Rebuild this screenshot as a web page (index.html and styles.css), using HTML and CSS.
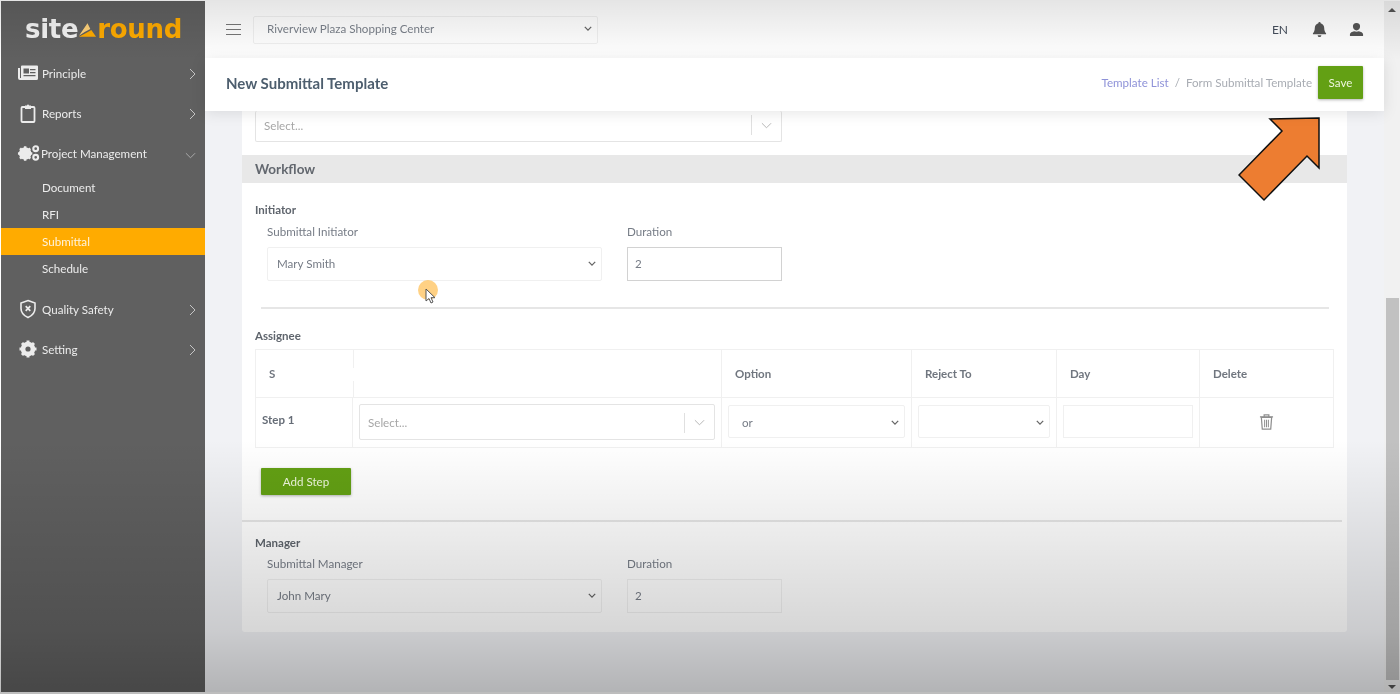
FILE: index.html
```html
<!DOCTYPE html>
<html lang="en">
<head>
    <meta charset="UTF-8">
    <meta name="viewport" content="width=device-width, initial-scale=1.0">
    <title>New Submittal Template</title>
    <link rel="stylesheet" href="styles.css">
</head>
<body>
    <svg class="icon-defs" width="0" height="0">
        <symbol id="chevron" viewBox="0 0 10 6"><path d="M1 1l4 4 4-4" fill="none" stroke="currentColor" stroke-width="1.6"/></symbol>
        <symbol id="chevron-thin" viewBox="0 0 12 7"><path d="M1 1l5 5 5-5" fill="none" stroke="currentColor" stroke-width="1"/></symbol>
        <symbol id="caret-right" viewBox="0 0 7 12"><path d="M1 1l5 5-5 5" fill="none" stroke="currentColor" stroke-width="1"/></symbol>
    </svg>

    <aside class="sidebar">
        <div class="logo"><span>site</span><svg class="logo-mark" viewBox="0 0 20 14"><path d="M1 13L10 0l3 6-6 3z" fill="#ffd27a"/><path d="M1 14l8-4 5-3 5 7z" fill="#ffab00"/></svg><span class="logo-accent">round</span></div>

        <nav class="menu">
            <a class="menu-item">
                <svg class="menu-icon" viewBox="0 0 20 16"><path d="M0 3v10a2 2 0 0 0 2 2h16.500a1.500 1.500 0 0 0 1.500-1.500v-12A1 1 0 0 0 19 .5H4a1 1 0 0 0-1 1V13H2V3z" fill="currentColor"/><path d="M5.500 3.500h5.500v5H5.500zM12 4h5.500v1.300H12zM12 7h5.500v1.300H12zM5.500 10h12v1.300h-12z" fill="#606060"/></svg>
                <span>Principle</span>
                <svg class="menu-caret"><use href="#caret-right"/></svg>
            </a>
            <a class="menu-item">
                <svg class="menu-icon" viewBox="0 0 20 20"><path d="M4.500 4h11a1 1 0 0 1 1 1v13a1 1 0 0 1-1 1h-11a1 1 0 0 1-1-1V5a1 1 0 0 1 1-1z" fill="none" stroke="currentColor" stroke-width="1.800"/><path d="M7 2.500h2a1 1 0 0 1 2 0h2V6H7z" fill="currentColor"/></svg>
                <span>Reports</span>
                <svg class="menu-caret"><use href="#caret-right"/></svg>
            </a>
            <a class="menu-item">
                <svg class="menu-icon menu-icon-wide" viewBox="0 0 24 18"><circle cx="8.500" cy="9.500" r="4.500" fill="none" stroke="currentColor" stroke-width="4"/><path d="M8.500 2v15M1 9.500h15M3.200 4.200l10.600 10.600M13.800 4.200L3.200 14.800" stroke="currentColor" stroke-width="2.600"/><circle cx="19.500" cy="4.500" r="2.500" fill="none" stroke="currentColor" stroke-width="2.200"/><circle cx="19.500" cy="13.500" r="2.500" fill="none" stroke="currentColor" stroke-width="2.200"/></svg>
                <span>Project Management</span>
                <svg class="menu-caret menu-caret-down"><use href="#chevron-thin"/></svg>
            </a>
            <div class="submenu">
                <a class="submenu-item">Document</a>
                <a class="submenu-item">RFI</a>
                <a class="submenu-item active">Submittal</a>
                <a class="submenu-item">Schedule</a>
            </div>
            <a class="menu-item">
                <svg class="menu-icon" viewBox="0 0 20 20"><path d="M10 1.500l7 2.500v5.500c0 4-3 7.200-7 9-4-1.800-7-5-7-9V4z" fill="none" stroke="currentColor" stroke-width="1.600"/><path d="M7.700 7.200l4.600 4.600M12.300 7.200l-4.600 4.600" stroke="currentColor" stroke-width="1.700"/></svg>
                <span>Quality Safety</span>
                <svg class="menu-caret"><use href="#caret-right"/></svg>
            </a>
            <a class="menu-item">
                <svg class="menu-icon" viewBox="0 0 20 20"><circle cx="10" cy="10" r="5" fill="none" stroke="currentColor" stroke-width="4.500"/><path d="M10 1.500v17M1.500 10h17M4 4l12 12M16 4L4 16" stroke="currentColor" stroke-width="3"/><circle cx="10" cy="10" r="2.600" fill="#606060"/></svg>
                <span>Setting</span>
                <svg class="menu-caret"><use href="#caret-right"/></svg>
            </a>
        </nav>
    </aside>

    <div class="main">
        <div class="main-column">
            <header class="topbar">
                <div class="hamburger"><i></i><i></i><i></i></div>
                <div class="project-select">
                    <span>Riverview Plaza Shopping Center</span>
                    <svg class="chevron"><use href="#chevron"/></svg>
                </div>
                <div class="topbar-right">
                    <span class="lang">EN</span>
                    <svg class="top-icon" viewBox="0 0 16 16"><path d="M8 0a1.200 1.200 0 0 1 1.200 1.300C11.500 1.900 13 3.800 13 6.200c0 3.500 1 4.800 2 5.800v1H1v-1c1-1 2-2.300 2-5.800 0-2.400 1.500-4.300 3.800-4.900A1.200 1.200 0 0 1 8 0zM6 14h4a2 2 0 0 1-4 0z" fill="currentColor"/></svg>
                    <svg class="top-icon" viewBox="0 0 16 16"><path d="M8 1a3.800 3.800 0 0 1 3.800 3.900C11.800 7.100 10.100 9 8 9S4.200 7.100 4.200 4.900A3.800 3.800 0 0 1 8 1zM1 15v-2c0-1.600 2.400-2.800 4.500-3.200 1.600.7 3.400.7 5 0 2.100.4 4.500 1.600 4.500 3.200v2z" fill="currentColor"/></svg>
                </div>
            </header>

            <div class="page-header">
                <h1>New Submittal Template</h1>
                <div class="breadcrumb">
                    <a>Template List</a>
                    <span class="crumb-sep">/</span>
                    <span>Form Submittal Template</span>
                </div>
                <button class="btn btn-save">Save</button>
            </div>

            <div class="content">
                <div class="card">
                    <div class="select-row">
                        <div class="search-select search-select-top">
                            <span>Select...</span>
                            <i class="divider"></i>
                            <svg class="chevron-thin"><use href="#chevron-thin"/></svg>
                        </div>
                    </div>

                    <div class="section-band">Workflow</div>

                    <div class="group group-initiator">
                        <div class="group-title">Initiator</div>
                        <div class="field-row">
                            <div class="field field-wide">
                                <label>Submittal Initiator</label>
                                <div class="fake-select"><span>Mary Smith</span><svg class="chevron"><use href="#chevron"/></svg></div>
                            </div>
                            <div class="field field-short">
                                <label>Duration</label>
                                <div class="fake-input fake-input-strong">2</div>
                            </div>
                        </div>
                    </div>

                    <hr class="rule rule-inner">

                    <div class="group">
                        <div class="group-title group-title-table">Assignee</div>
                        <table class="steps">
                            <colgroup>
                                <col class="col-step"><col class="col-user"><col class="col-option"><col class="col-reject"><col class="col-day"><col>
                            </colgroup>
                            <thead>
                                <tr>
                                    <th class="th-step">S</th>
                                    <th class="th-blank"></th>
                                    <th>Option</th>
                                    <th>Reject To</th>
                                    <th>Day</th>
                                    <th>Delete</th>
                                </tr>
                            </thead>
                            <tbody>
                                <tr>
                                    <td class="step-name">Step 1</td>
                                    <td class="cell-user">
                                        <div class="search-select">
                                            <span>Select...</span>
                                            <i class="divider"></i>
                                            <svg class="chevron-thin"><use href="#chevron-thin"/></svg>
                                        </div>
                                    </td>
                                    <td><div class="fake-select fake-select-small"><span>or</span><svg class="chevron"><use href="#chevron"/></svg></div></td>
                                    <td><div class="fake-select fake-select-small"><span></span><svg class="chevron"><use href="#chevron"/></svg></div></td>
                                    <td><div class="fake-input fake-input-small"></div></td>
                                    <td class="cell-delete">
                                        <svg class="trash" viewBox="0 0 16 18"><path d="M1 3.500h14M5.500 3V1.500h5V3" fill="none" stroke="currentColor" stroke-width="1.300"/><path d="M2.500 4l1 12.500h9l1-12.500z" fill="none" stroke="currentColor" stroke-width="1.300"/><path d="M6 6.500v8M8 6.500v8M10 6.500v8" stroke="currentColor" stroke-width="1.100"/></svg>
                                    </td>
                                </tr>
                            </tbody>
                        </table>
                        <button class="btn btn-add">Add Step</button>
                    </div>

                    <hr class="rule">

                    <div class="group group-manager">
                        <div class="group-title">Manager</div>
                        <div class="field-row">
                            <div class="field field-wide">
                                <label>Submittal Manager</label>
                                <div class="fake-select"><span>John Mary</span><svg class="chevron"><use href="#chevron"/></svg></div>
                            </div>
                            <div class="field field-short">
                                <label>Duration</label>
                                <div class="fake-input">2</div>
                            </div>
                        </div>
                    </div>
                </div>
            </div>
        </div>

        <div class="scrollbar">
            <i class="scroll-arrow scroll-up"></i>
            <div class="scroll-thumb"></div>
            <i class="scroll-arrow scroll-down"></i>
        </div>
    </div>

    <!-- video frame shading, cursor and the callout arrow sit over the page -->
    <div class="shade"></div>
    <div class="cursor-dot"></div>
    <svg class="cursor" viewBox="0 0 12 16"><path d="M1 1v12l3-2.500 2 4.500 2-1-2-4.300h4z" fill="#fff" stroke="#555" stroke-width="1"/></svg>
    <svg class="callout" viewBox="0 0 84 86"><path d="M81 2L32 3l12 12L1 59l25 25 43-44 12 12z" fill="#ed7d31" stroke="#111" stroke-width="1.500"/></svg>
</body>
</html>
```

FILE: styles.css
```css
* {
    box-sizing: border-box;
}

html, body {
    height: 100%;
}

body {
    margin: 0;
    padding: 1px 0 2px 1px;
    display: flex;
    overflow: hidden;
    background-color: #fff;
    font-family: 'Lato', sans-serif;
    font-size: 11.6px;
    color: #6b7280;
    filter: blur(0.4px);
}

.icon-defs {
    position: absolute;
}

/* sidebar */
.sidebar {
    width: 204px;
    flex-shrink: 0;
    background-color: #606060;
    color: #ececec;
}

.logo {
    height: 53px;
    padding: 10px 0 0 24px;
    display: flex;
    align-items: flex-start;
    font-family: 'DejaVu Sans', sans-serif;
    font-size: 26px;
    font-weight: 700;
    line-height: 36px;
    letter-spacing: -0.3px;
    color: #f3f3f3;
}

.logo-mark {
    width: 19px;
    height: 14px;
    margin: 12px 0 0 0;
}

.logo-accent {
    color: #ffab00;
}

.menu-item {
    height: 40px;
    padding: 0 9px 2px 17px;
    display: flex;
    align-items: center;
    font-size: 11.6px;
}

.menu-icon {
    width: 20px;
    height: 20px;
    margin-right: 4px;
    flex-shrink: 0;
}

.menu-icon-wide {
    width: 23px;
    margin: 0 1px 0 -1px;
}

.menu-item span {
    flex: 1;
}

.menu-caret {
    width: 7px;
    height: 12px;
    margin-top: 2px;
    color: #c4c4c4;
}

.menu-caret-down {
    width: 11px;
    height: 7px;
    margin: 4px 0 0 0;
    color: #b0b0b0;
}

.submenu {
    padding: 0 0 8px;
}

.submenu-item {
    display: block;
    height: 27px;
    padding-left: 41px;
    line-height: 27px;
    font-size: 11.6px;
}

.submenu-item.active {
    background-color: #ffab00;
    color: #fff3dc;
}

/* main column */
.main {
    flex: 1;
    display: flex;
    min-width: 0;
    background-color: #f1f2f5;
}

.main-column {
    flex: 1;
    display: flex;
    flex-direction: column;
    min-width: 0;
}

.topbar {
    height: 57px;
    padding: 0 20px 0 21px;
    display: flex;
    align-items: center;
    background-color: #fff;
}

.hamburger {
    width: 15px;
    margin-right: 12px;
    display: flex;
    flex-direction: column;
    gap: 3.500px;
}

.hamburger i {
    height: 1.500px;
    background-color: #777;
}

.project-select {
    width: 345px;
    height: 28px;
    padding: 0 5px 2px 13px;
    display: flex;
    align-items: center;
    justify-content: space-between;
    border: 1px solid #f0f0f0;
    border-radius: 2px;
    color: #7a808a;
}

.chevron {
    width: 8px;
    height: 5px;
    color: #666;
    flex-shrink: 0;
}

.topbar-right {
    margin-left: auto;
    display: flex;
    align-items: center;
    gap: 22px;
    color: #555;
}

.lang {
    font-size: 12px;
    color: #454e5c;
    margin-right: 2px;
}

.top-icon {
    width: 15px;
    height: 15px;
}

.page-header {
    position: relative;
    z-index: 1;
    height: 53px;
    padding: 0 21px 4px 21px;
    display: flex;
    align-items: center;
    background-color: #fff;
    box-shadow: 0 2px 14px rgba(0, 0, 0, 0.1);
}

.page-header h1 {
    margin: 0;
    font-size: 15px;
    font-weight: 700;
    color: #4d5e6e;
}

.breadcrumb {
    margin-left: auto;
    display: flex;
    gap: 6px;
    font-size: 11.6px;
    color: #a8acb3;
}

.breadcrumb a {
    color: #8e92d8;
}

.btn {
    border: none;
    border-radius: 1px;
    background-color: #63a014;
    color: #eef6dd;
    font-family: inherit;
    font-size: 11.6px;
    box-shadow: 0 1px 3px rgba(0, 0, 0, 0.3);
}

.btn-save {
    width: 45px;
    height: 33px;
    margin-left: 6px;
}

.content {
    flex: 1;
    min-height: 0;
    padding: 0 37px;
}

.card {
    background-color: #fff;
    border-radius: 0 0 3px 3px;
    height: 521px;
}

.select-row {
    padding: 0 13px;
    height: 44px;
}

.search-select {
    height: 36px;
    padding: 0 9px 0 8px;
    display: flex;
    align-items: center;
    border: 1px solid #e4e4e4;
    border-radius: 2px;
    color: #a6a6a6;
}

.search-select span {
    flex: 1;
}

.search-select-top {
    width: 527px;
    height: 31px;
    padding-bottom: 2px;
    border-top: none;
}

.divider {
    width: 1px;
    height: 20px;
    margin-right: 9px;
    background-color: #e0e0e0;
}

.chevron-thin {
    width: 11px;
    height: 7px;
    color: #b0b0b0;
}

.section-band {
    height: 28px;
    padding-left: 13px;
    background-color: #e8e8e8;
    font-size: 13.5px;
    font-weight: 700;
    line-height: 28px;
    color: #62676e;
}

.group {
    padding: 0 13px;
}

.group-initiator {
    padding-top: 19px;
}

.group-initiator .field-row {
    margin-top: 8px;
}

.group-title {
    height: 15px;
    font-size: 11.5px;
    font-weight: 700;
    line-height: 15px;
    color: #5f656d;
}

.group-title-table {
    margin: 19px 0 6px;
}

.field-row {
    display: flex;
    gap: 25px;
    padding-left: 12px;
    margin-top: 7px;
}

.field label {
    display: block;
    height: 15px;
    margin-bottom: 7px;
    line-height: 13px;
    color: #767c86;
}

.field-wide {
    width: 335px;
}

.field-short {
    width: 155px;
}

.fake-select {
    height: 34px;
    padding: 0 5px 2px 9px;
    display: flex;
    align-items: center;
    justify-content: space-between;
    border: 1px solid #f0f0f0;
    border-radius: 2px;
    color: #767c86;
}

.fake-input {
    height: 34px;
    padding-left: 7px;
    border: 1px solid #f0f0f0;
    line-height: 32px;
    color: #767c86;
}

.fake-input-strong {
    border-color: #d2d2d2;
}

.rule {
    height: 2px;
    margin: 0 5px 0 0;
    border: none;
    background-color: #e6e6e6;
}

.rule-inner {
    margin: 26px 18px 0 19px;
}

.steps {
    width: 1079px;
    border-collapse: collapse;
    table-layout: fixed;
}

.col-step { width: 97px; }
.col-user { width: 369px; }
.col-option { width: 190px; }
.col-reject { width: 145px; }
.col-day { width: 143px; }

.steps th, .steps td {
    border: 1px solid #f0f0f0;
    padding: 0 6px;
    vertical-align: middle;
}

.steps th {
    height: 48px;
    padding-left: 13px;
    text-align: left;
    font-size: 11.5px;
    font-weight: 700;
    color: #70767f;
}

.steps .th-step {
    border-right: none;
}

/* the divider after the first heading is broken in the middle */
.steps .th-blank {
    border-left: none;
    background: linear-gradient(#f0f0f0 18px, transparent 18px, transparent 31px, #f0f0f0 31px) left / 1px 100% no-repeat;
}

.steps td {
    height: 50px;
}

.steps .step-name {
    font-size: 11.5px;
    font-weight: 700;
    color: #666d77;
    padding-bottom: 7px;
}

.cell-user .search-select {
    margin-top: -2px;
    padding-top: 2px;
}

.fake-select-small {
    height: 33px;
    margin-top: -2px;
    padding: 1px 5px 0 13px;
}

.fake-input-small {
    height: 33px;
    margin-top: -2px;
}

.cell-delete {
    text-align: center;
}

.trash {
    width: 15px;
    height: 18px;
    margin-top: -2px;
    color: #8f8f8f;
    vertical-align: middle;
}

.btn-add {
    display: block;
    width: 90px;
    height: 27px;
    margin: 20px 0 25px 6px;
    font-size: 11.6px;
}

.group-manager {
    padding-top: 13px;
}

/* scrollbar */
.scrollbar {
    width: 16px;
    flex-shrink: 0;
    display: flex;
    flex-direction: column;
    align-items: center;
    background-color: #f1f1f1;
}

.scroll-arrow {
    width: 0;
    height: 0;
    border-left: 4px solid transparent;
    border-right: 4px solid transparent;
}

.scroll-up {
    margin-top: 7px;
    border-bottom: 4px solid #555;
}

.scroll-thumb {
    width: 13px;
    height: 382px;
    margin-top: 286px;
    background-color: #c1c1c1;
}

.scroll-down {
    margin-top: 5px;
    border-top: 4px solid #555;
}

/* overlays */
.shade {
    position: fixed;
    inset: 0;
    pointer-events: none;
    background: linear-gradient(to bottom,
        rgba(0, 0, 0, 0.1) 0,
        rgba(0, 0, 0, 0) 60px,
        rgba(0, 0, 0, 0) 440px,
        rgba(0, 0, 0, 0.16) 632px,
        rgba(0, 0, 0, 0.26) 692px);
}

.cursor-dot {
    position: absolute;
    left: 418px;
    top: 280px;
    width: 20px;
    height: 20px;
    border-radius: 50%;
    background-color: rgba(255, 190, 80, 0.7);
}

.cursor {
    position: absolute;
    left: 425px;
    top: 288px;
    width: 12px;
    height: 16px;
}

.callout {
    position: absolute;
    left: 1238px;
    top: 116px;
    width: 84px;
    height: 86px;
}
```
